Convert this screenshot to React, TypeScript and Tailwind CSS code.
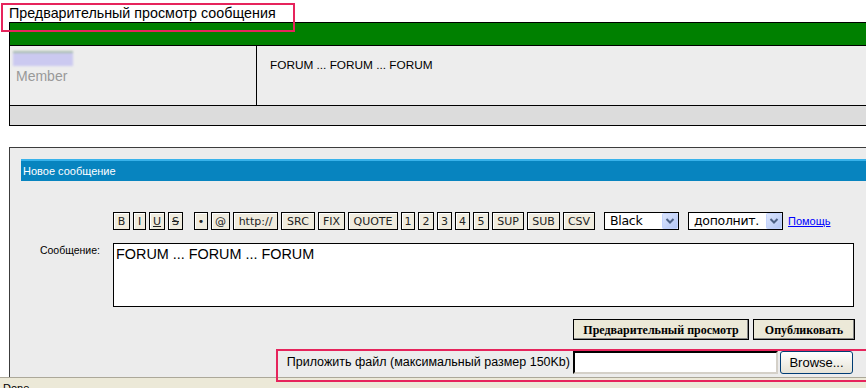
import React from "react";

const sans = { fontFamily: '"Liberation Sans", Arial, sans-serif' };

type Tool = { label: React.ReactNode; w: string; extra?: string };

const tools: Tool[] = [
  { label: "B", w: "w-[17px]" },
  { label: "I", w: "w-[13px]" },
  { label: <span className="underline">U</span>, w: "w-[16px]" },
  { label: <span className="line-through">S</span>, w: "w-[15px]" },
  { label: "•", w: "w-[14px]", extra: "ml-[8px]" },
  { label: "@", w: "w-[19px]" },
  { label: "http://", w: "w-[45px]" },
  { label: "SRC", w: "w-[34px]" },
  { label: "FIX", w: "w-[27px]" },
  { label: "QUOTE", w: "w-[50px]" },
  { label: "1", w: "w-[14px]" },
  { label: "2", w: "w-[16px]" },
  { label: "3", w: "w-[15px]" },
  { label: "4", w: "w-[15px]" },
  { label: "5", w: "w-[16px]" },
  { label: "SUP", w: "w-[32px]" },
  { label: "SUB", w: "w-[33px]" },
  { label: "CSV", w: "w-[32px]" },
];

function SelectArrow() {
  return (
    <svg width="16" height="16" viewBox="0 0 16 16" className="shrink-0">
      <defs>
        <linearGradient id="arr" x1="0" y1="0" x2="1" y2="1">
          <stop offset="0" stopColor="#dde6fd" />
          <stop offset="1" stopColor="#b3c6f5" />
        </linearGradient>
      </defs>
      <rect x="0.5" y="0.5" width="15" height="15" rx="1" fill="url(#arr)" stroke="#c3d3fd" />
      <path d="M4.5 6 L8 9.5 L11.5 6" fill="none" stroke="#4d6185" strokeWidth="2" />
    </svg>
  );
}

function FakeSelect(props: { value: string; w: string; extra: string }) {
  return (
    <div
      className={`${props.w} ${props.extra} h-[18px] flex items-center justify-between border border-black bg-white pl-[5px] text-[12.5px] text-black`}
      style={{ fontFamily: '"DejaVu Sans", Verdana, sans-serif' }}
    >
      <span className="leading-none tracking-[-0.3px]">{props.value}</span>
      <SelectArrow />
    </div>
  );
}

export default function App() {
  return (
    <div className="relative w-[866px] h-[388px] overflow-hidden bg-white flex flex-col" style={sans}>
      {/* title */}
      <div className="h-[22px] pl-[9px] pt-[5px] text-[14.3px] leading-[16px] text-black">
        Предварительный просмотр сообщения
      </div>

      {/* preview table */}
      <div className="ml-[9px] border-l border-t border-black">
        <div className="h-[23px] bg-[#008000] border-b border-black" />
        <div className="flex h-[60px] bg-[#ededed] border-b border-black">
          <div className="w-[247px] border-r border-black pl-[3px] pt-[5px]">
            <div className="w-[60px] h-[15px] bg-[#cbc9f0] border-t-2 border-[#a7bcae] blur-[1.2px]" />
            <div className="mt-[2px] pl-[3px] text-[14px] leading-[16px] text-[#999999]">Member</div>
          </div>
          <div className="pl-[13px] pt-[12px] text-[11.8px] leading-[14px] text-black">
            FORUM ... FORUM ... FORUM
          </div>
        </div>
        <div className="h-[20px] bg-[#dcdcdc] border-b border-black" />
      </div>

      <div className="h-[21px]" />

      {/* new message panel */}
      <div className="flex-1 ml-[9px] border-l border-t border-[#3c3c3c] bg-[#ececec] pt-[11px] pl-[11px]">
        <div className="h-[22px] flex items-center border-t-2 border-[#38b2ea] bg-[#0784bf] pl-[2px] text-[11px] text-white">
          Новое сообщение
        </div>

        <div className="mt-[31px] flex items-center">
          <div className="w-[92px] shrink-0" />
          <div className="flex items-center gap-[3px]" style={{ fontFamily: '"DejaVu Sans", Verdana, sans-serif' }}>
            {tools.map((t, i) => (
              <div
                key={i}
                className={`${t.w} ${t.extra ?? ""} h-[18px] flex items-center justify-center border border-black bg-[#efebde] shadow-[inset_1px_1px_0_#fff] text-[11px] leading-none text-[#222]`}
              >
                {t.label}
              </div>
            ))}
            <FakeSelect value="Black" w="w-[75px]" extra="ml-[6px]" />
            <FakeSelect value="дополнит." w="w-[95px]" extra="ml-[6px]" />
            <a href="#" className="ml-[2px] text-[11px] text-[#0000ff] underline" style={sans}>
              Помощь
            </a>
          </div>
        </div>

        <div className="mt-[13px] flex">
          <div className="w-[92px] shrink-0 pr-[13px] pt-[1px] text-right text-[10.5px] leading-[13px] text-black">
            Сообщение:
          </div>
          <div className="w-[741px] h-[64px] border border-black bg-white pl-[2px] pt-[2px] text-[14.4px] leading-[17px] text-black">
            FORUM ... FORUM ... FORUM
          </div>
        </div>

        <div className="mt-[12px] w-[834px] flex justify-end gap-[4px]" style={{ fontFamily: '"Liberation Serif", "Times New Roman", serif' }}>
          <div className="w-[176px] h-[21px] flex items-center justify-center border border-black bg-[#ece9d8] shadow-[inset_-1px_-1px_0_#888] text-[12px] font-bold text-black">
            Предварительный просмотр
          </div>
          <div className="w-[102px] h-[21px] flex items-center justify-center border border-black bg-[#ece9d8] shadow-[inset_-1px_-1px_0_#888] text-[12px] font-bold text-black">
            Опубликовать
          </div>
        </div>

        <div className="mt-[11px] w-[832px] flex justify-end items-center">
          <span className="mr-[3px] text-[12.5px] text-black">Приложить файл (максимальный размер 150Kb)</span>
          <div className="w-[205px] h-[23px] bg-white border-2 border-t-black border-l-black border-r-[#d4d0c8] border-b-[#d4d0c8]" />
          <div className="ml-[2px] w-[73px] h-[23px] flex items-center justify-center rounded-[3px] border border-[#003c74] bg-gradient-to-b from-white to-[#e6e3d6] text-[13px] text-black">
            Browse...
          </div>
        </div>
      </div>

      {/* status bar */}
      <div className="h-[11px] border-t border-[#aca899] bg-[#ece9d8] pl-[3px] pt-[4px] text-[11px] leading-[12px] text-black">
        Done
      </div>

      {/* annotations */}
      <div className="absolute left-[1px] top-[3px] w-[294px] h-[29px] border-2 border-[#e6245c]" />
      <div className="absolute left-[276px] top-[349px] w-[592px] h-[33px] border-2 border-[#e6245c]" />
    </div>
  );
}
